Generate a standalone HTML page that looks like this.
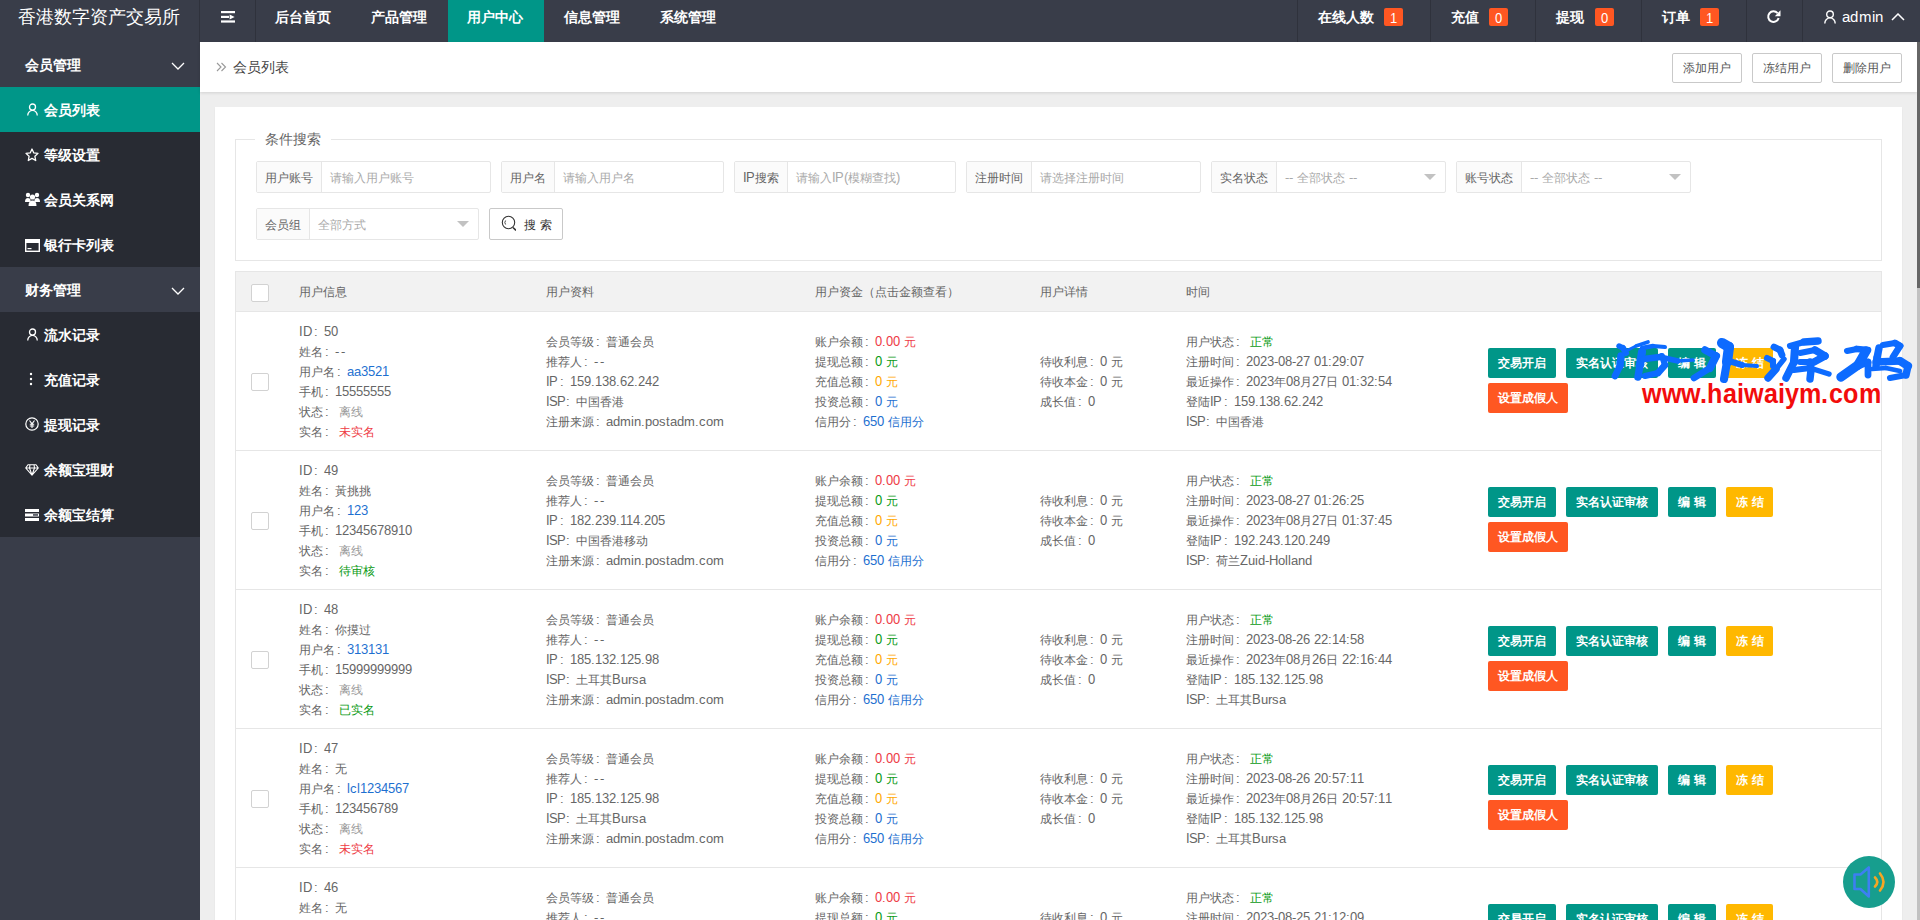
<!DOCTYPE html>
<html><head><meta charset="utf-8">
<style>
@font-face{font-family:"Liberation Sans";src:local("Liberation Sans"),local("LiberationSans");font-weight:normal;size-adjust:106%;}
@font-face{font-family:"Liberation Sans";src:local("Liberation Sans Bold"),local("LiberationSans-Bold");font-weight:bold;size-adjust:106%;}
*{box-sizing:border-box;margin:0;padding:0}
html,body{width:1920px;height:920px;overflow:hidden;background:#eeeeee}
body{font-family:"Liberation Sans",sans-serif;color:#666;font-size:12px;position:relative}
.abs{position:absolute}
#top{left:0;top:0;width:1920px;height:42px;background:#393D49;color:#fff}
#logo{left:0;top:0;width:200px;height:42px;font-size:18px;line-height:33px;padding-left:18px;color:#fff;border-right:1px solid #2f323c}
.nv{top:0;height:42px;line-height:34px;font-size:14px;color:#fff;font-weight:bold}
.dv{top:0;width:1px;height:42px;background:#2f323c}
.badge{display:inline-block;background:#FF5722;color:#fff;font-size:12px;font-weight:normal;height:18px;line-height:22px;width:19px;text-align:center;border-radius:2px;vertical-align:middle;margin-top:-3px}
#side{left:0;top:42px;width:200px;height:878px;background:#393D49;color:#fff;font-size:14px;font-weight:bold}
.grp{height:45px;line-height:46px;padding-left:25px;position:relative;background:#393D49}
.sub{background:#282B33}
.it{height:45px;line-height:47px;padding-left:44px;position:relative;color:#fff}
.it.on{background:#009688}
.it svg{position:absolute;left:25px;top:15px}
#crumb{left:200px;top:42px;width:1717px;height:50px;background:#fff;box-shadow:0 1px 3px rgba(0,0,0,.12)}
.hbtn{top:11px;width:70px;height:30px;border:1px solid #C9C9C9;border-radius:2px;background:#fff;color:#555;font-size:12px;line-height:28px;text-align:center}
#card{left:215px;top:107px;width:1687px;height:900px;background:#fff;box-shadow:0 1px 2px rgba(0,0,0,.05)}
#sb{left:1917px;top:42px;width:3px;height:878px;background:#c1c1c1}
#sbt{left:1917px;top:42px;width:3px;height:246px;background:#666}
.ig{position:absolute;height:32px;border:1px solid #e6e6e6;border-radius:2px;background:#fff;display:flex}
.ig .lb{background:#FBFBFB;border-right:1px solid #e6e6e6;padding:0 8px 0 8px;line-height:31px;color:#666;white-space:nowrap}
.ig .ph{padding-left:8px;line-height:31px;color:#aaa;white-space:nowrap;flex:1;position:relative}
.ig .ar{position:absolute;right:9px;top:12px;width:0;height:0;border-left:6px solid transparent;border-right:6px solid transparent;border-top:6px solid #c2c2c2}
/*TBLCSS*/#tbl{left:20px;top:164px;width:1647px;height:800px;border-left:1px solid #e6e6e6;border-right:1px solid #e6e6e6;border-top:1px solid #e6e6e6}
.th{left:0;top:0;width:1645px;height:40px;background:#f2f2f2;border-bottom:1px solid #e6e6e6;line-height:39px;color:#666}
.tr{left:0;width:1645px;height:139px;border-bottom:1px solid #e6e6e6}
.cb{display:block;width:18px;height:18px;border:1px solid #d2d2d2;border-radius:2px;background:#fff}
.dd{font-weight:normal;letter-spacing:1.5px}.n3{font-weight:normal;letter-spacing:-1.2px}.n2{font-weight:normal;letter-spacing:-0.6px}
.k{display:inline-block;width:12px;padding-left:2px;font-style:normal}
.c p{height:20px;line-height:20px;white-space:nowrap;color:#666}
.bt{display:inline-block;font-weight:bold;height:30px;line-height:30px;background:#009688;color:#fff;text-align:center;border-radius:2px;margin-right:10px;vertical-align:top;white-space:nowrap}
.bt.yl{background:#FFB800}.bt.og{background:#FF5722}
/*END*/</style></head><body>

<div id="top" class="abs">
  <div id="logo" class="abs">香港数字资产交易所</div>
  <svg class="abs" style="left:221px;top:11px" width="14" height="12" viewBox="0 0 14 12"><rect x="0" y="0" width="14" height="2.2" fill="#fff"/><rect x="0" y="4.8" width="8" height="2.2" fill="#fff"/><path d="M8.6 3.4 L13.6 5.9 L8.6 8.4Z" fill="#fff"/><rect x="0" y="9.4" width="14" height="2.2" fill="#fff"/></svg>
  <div class="dv abs" style="left:255px"></div>
  <div class="nv abs" style="left:275px">后台首页</div>
  <div class="nv abs" style="left:371px">产品管理</div>
  <div class="abs" style="left:448px;top:0;width:96px;height:42px;background:#009688"></div>
  <div class="nv abs" style="left:467px">用户中心</div>
  <div class="nv abs" style="left:564px">信息管理</div>
  <div class="nv abs" style="left:660px">系统管理</div>
  <div class="dv abs" style="left:1297px"></div>
  <div class="nv abs" style="left:1318px">在线人数 <span class="badge abs" style="left:66px;top:8px;margin:0">1</span></div>
  <div class="dv abs" style="left:1430px"></div>
  <div class="nv abs" style="left:1451px">充值<span class="badge abs" style="left:38px;top:8px;margin:0">0</span></div>
  <div class="dv abs" style="left:1535px"></div>
  <div class="nv abs" style="left:1556px">提现<span class="badge abs" style="left:39px;top:8px;margin:0">0</span></div>
  <div class="dv abs" style="left:1641px"></div>
  <div class="nv abs" style="left:1662px">订单<span class="badge abs" style="left:38px;top:8px;margin:0">1</span></div>
  <div class="dv abs" style="left:1746px"></div>
  <svg class="abs" style="left:1766px;top:10px" width="15" height="14" viewBox="0 0 15 14"><path d="M11.56 3.19 A5.3 5.3 0 1 0 12.62 7.97" fill="none" stroke="#fff" stroke-width="2"/><path d="M8.8 6.2 L14.5 6.2 L14.5 0.2 Z" fill="#fff"/></svg>
  <div class="dv abs" style="left:1802px"></div>
  <svg class="abs" style="left:1824px;top:10px" width="12" height="14" viewBox="0 0 12 14"><circle cx="6" cy="4.3" r="3.3" fill="none" stroke="#fff" stroke-width="1.4"/><path d="M0.8 13.5 A5.2 5.6 0 0 1 11.2 13.5" fill="none" stroke="#fff" stroke-width="1.4"/></svg>
  <div class="nv abs" style="left:1842px;font-size:14px;line-height:34px;font-weight:normal;letter-spacing:0.3px">admin</div>
  <svg class="abs" style="left:1891px;top:13px" width="14" height="8" viewBox="0 0 14 8"><path d="M1 7 L7 1 L13 7" fill="none" stroke="#fff" stroke-width="1.5"/></svg>
</div>

<div id="side" class="abs">
  <div class="grp">会员管理<svg class="abs" style="left:171px;top:20px" width="14" height="8" viewBox="0 0 14 8"><path d="M1 1 L7 7 L13 1" fill="none" stroke="#fff" stroke-width="1.3"/></svg></div>
  <div class="sub">
    <div class="it on"><svg width="11" height="13" viewBox="0 0 12 14" style="left:27px;top:16px"><circle cx="6" cy="4.3" r="3.3" fill="none" stroke="#fff" stroke-width="1.4"/><path d="M0.8 13.5 A5.2 5.6 0 0 1 11.2 13.5" fill="none" stroke="#fff" stroke-width="1.4"/></svg>会员列表</div>
    <div class="it"><svg width="14" height="14" viewBox="0 0 14 14" style="top:16px"><path d="M7 1 L8.8 4.9 L13 5.4 L9.9 8.3 L10.7 12.5 L7 10.4 L3.3 12.5 L4.1 8.3 L1 5.4 L5.2 4.9Z" fill="none" stroke="#fff" stroke-width="1.3" stroke-linejoin="round"/></svg>等级设置</div>
    <div class="it"><svg width="15" height="14" viewBox="0 0 15 14"><circle cx="3" cy="3" r="2.2" fill="#fff"/><circle cx="12" cy="3" r="2.2" fill="#fff"/><circle cx="7.5" cy="5" r="2.6" fill="#fff"/><path d="M0 10 Q0 6 3 6 Q5 6 5.5 7.5 L5.5 10Z M15 10 Q15 6 12 6 Q10 6 9.5 7.5 L9.5 10Z" fill="#fff"/><path d="M3.5 14 Q3.5 8.5 7.5 8.5 Q11.5 8.5 11.5 14Z" fill="#fff"/></svg>会员关系网</div>
    <div class="it"><svg width="15" height="13" viewBox="0 0 15 13" style="top:17px"><rect x="0.7" y="0.7" width="13.6" height="11.6" fill="none" stroke="#fff" stroke-width="1.4"/><rect x="0.7" y="0.7" width="13.6" height="3.3" fill="#fff"/><rect x="2.5" y="9" width="4" height="1.2" fill="#fff"/></svg>银行卡列表</div>
  </div>
  <div class="grp">财务管理<svg class="abs" style="left:171px;top:20px" width="14" height="8" viewBox="0 0 14 8"><path d="M1 1 L7 7 L13 1" fill="none" stroke="#fff" stroke-width="1.3"/></svg></div>
  <div class="sub">
    <div class="it"><svg width="11" height="13" viewBox="0 0 12 14" style="left:27px;top:16px"><circle cx="6" cy="4.3" r="3.3" fill="none" stroke="#fff" stroke-width="1.4"/><path d="M0.8 13.5 A5.2 5.6 0 0 1 11.2 13.5" fill="none" stroke="#fff" stroke-width="1.4"/></svg>流水记录</div>
    <div class="it"><svg width="12" height="14" viewBox="0 0 12 14"><circle cx="6" cy="2" r="1.2" fill="#fff"/><circle cx="6" cy="7" r="1.2" fill="#fff"/><circle cx="6" cy="12" r="1.2" fill="#fff"/></svg>充值记录</div>
    <div class="it"><svg width="14" height="14" viewBox="0 0 14 14"><circle cx="7" cy="7" r="6.2" fill="none" stroke="#fff" stroke-width="1.2"/><path d="M4.5 3.5 L7 6.8 L9.5 3.5 M7 6.8 V11 M4.8 7.2 H9.2 M4.8 9 H9.2" fill="none" stroke="#fff" stroke-width="1.1"/></svg>提现记录</div>
    <div class="it"><svg width="14" height="12" viewBox="0 0 14 12" style="top:17px"><path d="M3 0.7 H11 L13.3 4 L7 11.2 L0.7 4Z M0.7 4 H13.3 M5 0.7 L4.5 4 L7 11 L9.5 4 L9 0.7" fill="none" stroke="#fff" stroke-width="1.1" stroke-linejoin="round"/></svg>余额宝理财</div>
    <div class="it"><svg width="14" height="12" viewBox="0 0 14 12" style="top:17px"><rect x="0" y="0" width="14" height="3" fill="#fff"/><rect x="0" y="4.5" width="14" height="3" fill="#fff"/><rect x="0" y="9" width="14" height="3" fill="#fff"/><rect x="8" y="5.2" width="5" height="1.5" fill="#393D49"/></svg>余额宝结算</div>
  </div>
</div>
<div id="crumb" class="abs">
  <svg class="abs" style="left:16px;top:20px" width="11" height="10" viewBox="0 0 11 10"><path d="M1 1 L5 5 L1 9 M5.5 1 L9.5 5 L5.5 9" fill="none" stroke="#999" stroke-width="1.1"/></svg>
  <div class="abs" style="left:33px;top:0;line-height:50px;font-size:14px;color:#444">会员列表</div>
  <div class="hbtn abs" style="left:1472px">添加用户</div>
  <div class="hbtn abs" style="left:1552px">冻结用户</div>
  <div class="hbtn abs" style="left:1632px">删除用户</div>
</div>
<div id="card" class="abs">
  <div class="abs" style="left:20px;top:32px;width:1647px;height:122px;border:1px solid #e6e6e6"></div>
  <div class="abs" style="left:40px;top:22px;width:76px;height:20px;background:#fff;text-align:center;line-height:20px;font-size:14px;color:#666">条件搜索</div>
  <div class="ig" style="left:41px;top:54px;width:235px"><div class="lb">用户账号</div><div class="ph">请输入用户账号</div></div>
  <div class="ig" style="left:286px;top:54px;width:223px"><div class="lb">用户名</div><div class="ph">请输入用户名</div></div>
  <div class="ig" style="left:519px;top:54px;width:222px"><div class="lb"><b class="n2">IP</b>搜索</div><div class="ph">请输入<b class="n2">IP</b>(模糊查找)</div></div>
  <div class="ig" style="left:751px;top:54px;width:235px"><div class="lb">注册时间</div><div class="ph">请选择注册时间</div></div>
  <div class="ig" style="left:996px;top:54px;width:235px"><div class="lb">实名状态</div><div class="ph">-- 全部状态 --<i class="ar"></i></div></div>
  <div class="ig" style="left:1241px;top:54px;width:235px"><div class="lb">账号状态</div><div class="ph">-- 全部状态 --<i class="ar"></i></div></div>
  <div class="ig" style="left:41px;top:101px;width:223px"><div class="lb">会员组</div><div class="ph">全部方式<i class="ar"></i></div></div>
  <div class="abs" style="left:274px;top:101px;width:74px;height:32px;border:1px solid #c9c9c9;border-radius:2px;background:#fff">
    <svg class="abs" style="left:10px;top:6px" width="16" height="17" viewBox="0 0 16 17"><circle cx="8.5" cy="7.5" r="6.2" fill="none" stroke="#333" stroke-width="1.1"/><path d="M13 12.5 L16 15.5" stroke="#333" stroke-width="1.6"/><path d="M5.6 5.5 A3.2 3.2 0 0 0 5.6 9.5" fill="none" stroke="#333" stroke-width="0.9"/></svg>
    <div class="abs" style="left:34px;top:1px;line-height:30px;color:#333;font-size:12px">搜 索</div>
  </div>
<!--TBL--><div id="tbl" class="abs">
<div class="th abs"><i class="cb abs" style="left:15px;top:12px"></i><span class="abs" style="left:63px">用户信息</span><span class="abs" style="left:310px">用户资料</span><span class="abs" style="left:579px">用户资金（点击金额查看）</span><span class="abs" style="left:804px">用户详情</span><span class="abs" style="left:950px">时间</span></div>
<div class="tr abs" style="top:40px"><i class="cb abs" style="left:15px;top:61px"></i><div class="c abs" style="left:63px;top:10px"><p>ID<i class="k">:</i>50</p><p>姓名<i class="k">:</i><b class="dd">--</b></p><p>用户名<i class="k">:</i><span style="color:#1d6fd0">aa3521</span></p><p>手机<i class="k">:</i>15555555</p><p>状态<i class="k">:</i> <span style="color:#999">离线</span></p><p>实名<i class="k">:</i> <span style="color:#ee3b45">未实名</span></p></div><div class="c abs" style="left:310px;top:20px"><p>会员等级<i class="k">:</i>普通会员</p><p>推荐人<i class="k">:</i><b class="dd">--</b></p><p><b class="n2">IP</b><i class="k">:</i>159.138.62.242</p><p><b class="n3">ISP</b><i class="k">:</i>中国香港</p><p>注册来源<i class="k">:</i>admin.postadm.com</p></div><div class="c abs" style="left:579px;top:20px"><p>账户余额<i class="k">:</i><span style="color:#ee3b45">0.00 元</span></p><p>提现总额<i class="k">:</i><span style="color:#0a9a14">0 元</span></p><p>充值总额<i class="k">:</i><span style="color:#FFA800">0 元</span></p><p>投资总额<i class="k">:</i><span style="color:#1d6fd0">0 元</span></p><p>信用分<i class="k">:</i><span style="color:#1d6fd0">650 信用分</span></p></div><div class="c abs" style="left:804px;top:40px"><p>待收利息<i class="k">:</i>0 元</p><p>待收本金<i class="k">:</i>0 元</p><p>成长值<i class="k">:</i>0</p></div><div class="c abs" style="left:950px;top:20px"><p>用户状态<i class="k">:</i> <span style="color:#0a9a14">正常</span></p><p>注册时间<i class="k">:</i>2023-08-27 01:29:07</p><p>最近操作<i class="k">:</i>2023年08月27日 01:32:54</p><p>登陆<b class="n2">IP</b><i class="k">:</i>159.138.62.242</p><p><b class="n3">ISP</b><i class="k">:</i>中国香港</p></div><div class="abs" style="left:1252px;top:36px;width:300px"><span class="bt" style="width:68px">交易开启</span><span class="bt" style="width:92px">实名认证审核</span><span class="bt" style="width:48px">编 辑</span><span class="bt yl" style="width:47px">冻 结</span><br><span class="bt og" style="width:80px;margin-top:5px">设置成假人</span></div></div>
<div class="tr abs" style="top:179px"><i class="cb abs" style="left:15px;top:61px"></i><div class="c abs" style="left:63px;top:10px"><p>ID<i class="k">:</i>49</p><p>姓名<i class="k">:</i>黃挑挑</p><p>用户名<i class="k">:</i><span style="color:#1d6fd0">123</span></p><p>手机<i class="k">:</i>12345678910</p><p>状态<i class="k">:</i> <span style="color:#999">离线</span></p><p>实名<i class="k">:</i> <span style="color:#0a9a14">待审核</span></p></div><div class="c abs" style="left:310px;top:20px"><p>会员等级<i class="k">:</i>普通会员</p><p>推荐人<i class="k">:</i><b class="dd">--</b></p><p><b class="n2">IP</b><i class="k">:</i>182.239.114.205</p><p><b class="n3">ISP</b><i class="k">:</i>中国香港移动</p><p>注册来源<i class="k">:</i>admin.postadm.com</p></div><div class="c abs" style="left:579px;top:20px"><p>账户余额<i class="k">:</i><span style="color:#ee3b45">0.00 元</span></p><p>提现总额<i class="k">:</i><span style="color:#0a9a14">0 元</span></p><p>充值总额<i class="k">:</i><span style="color:#FFA800">0 元</span></p><p>投资总额<i class="k">:</i><span style="color:#1d6fd0">0 元</span></p><p>信用分<i class="k">:</i><span style="color:#1d6fd0">650 信用分</span></p></div><div class="c abs" style="left:804px;top:40px"><p>待收利息<i class="k">:</i>0 元</p><p>待收本金<i class="k">:</i>0 元</p><p>成长值<i class="k">:</i>0</p></div><div class="c abs" style="left:950px;top:20px"><p>用户状态<i class="k">:</i> <span style="color:#0a9a14">正常</span></p><p>注册时间<i class="k">:</i>2023-08-27 01:26:25</p><p>最近操作<i class="k">:</i>2023年08月27日 01:37:45</p><p>登陆<b class="n2">IP</b><i class="k">:</i>192.243.120.249</p><p><b class="n3">ISP</b><i class="k">:</i>荷兰Zuid-Holland</p></div><div class="abs" style="left:1252px;top:36px;width:300px"><span class="bt" style="width:68px">交易开启</span><span class="bt" style="width:92px">实名认证审核</span><span class="bt" style="width:48px">编 辑</span><span class="bt yl" style="width:47px">冻 结</span><br><span class="bt og" style="width:80px;margin-top:5px">设置成假人</span></div></div>
<div class="tr abs" style="top:318px"><i class="cb abs" style="left:15px;top:61px"></i><div class="c abs" style="left:63px;top:10px"><p>ID<i class="k">:</i>48</p><p>姓名<i class="k">:</i>你摸过</p><p>用户名<i class="k">:</i><span style="color:#1d6fd0">313131</span></p><p>手机<i class="k">:</i>15999999999</p><p>状态<i class="k">:</i> <span style="color:#999">离线</span></p><p>实名<i class="k">:</i> <span style="color:#0a9a14">已实名</span></p></div><div class="c abs" style="left:310px;top:20px"><p>会员等级<i class="k">:</i>普通会员</p><p>推荐人<i class="k">:</i><b class="dd">--</b></p><p><b class="n2">IP</b><i class="k">:</i>185.132.125.98</p><p><b class="n3">ISP</b><i class="k">:</i>土耳其Bursa</p><p>注册来源<i class="k">:</i>admin.postadm.com</p></div><div class="c abs" style="left:579px;top:20px"><p>账户余额<i class="k">:</i><span style="color:#ee3b45">0.00 元</span></p><p>提现总额<i class="k">:</i><span style="color:#0a9a14">0 元</span></p><p>充值总额<i class="k">:</i><span style="color:#FFA800">0 元</span></p><p>投资总额<i class="k">:</i><span style="color:#1d6fd0">0 元</span></p><p>信用分<i class="k">:</i><span style="color:#1d6fd0">650 信用分</span></p></div><div class="c abs" style="left:804px;top:40px"><p>待收利息<i class="k">:</i>0 元</p><p>待收本金<i class="k">:</i>0 元</p><p>成长值<i class="k">:</i>0</p></div><div class="c abs" style="left:950px;top:20px"><p>用户状态<i class="k">:</i> <span style="color:#0a9a14">正常</span></p><p>注册时间<i class="k">:</i>2023-08-26 22:14:58</p><p>最近操作<i class="k">:</i>2023年08月26日 22:16:44</p><p>登陆<b class="n2">IP</b><i class="k">:</i>185.132.125.98</p><p><b class="n3">ISP</b><i class="k">:</i>土耳其Bursa</p></div><div class="abs" style="left:1252px;top:36px;width:300px"><span class="bt" style="width:68px">交易开启</span><span class="bt" style="width:92px">实名认证审核</span><span class="bt" style="width:48px">编 辑</span><span class="bt yl" style="width:47px">冻 结</span><br><span class="bt og" style="width:80px;margin-top:5px">设置成假人</span></div></div>
<div class="tr abs" style="top:457px"><i class="cb abs" style="left:15px;top:61px"></i><div class="c abs" style="left:63px;top:10px"><p>ID<i class="k">:</i>47</p><p>姓名<i class="k">:</i>无</p><p>用户名<i class="k">:</i><span style="color:#1d6fd0">lcl1234567</span></p><p>手机<i class="k">:</i>123456789</p><p>状态<i class="k">:</i> <span style="color:#999">离线</span></p><p>实名<i class="k">:</i> <span style="color:#ee3b45">未实名</span></p></div><div class="c abs" style="left:310px;top:20px"><p>会员等级<i class="k">:</i>普通会员</p><p>推荐人<i class="k">:</i><b class="dd">--</b></p><p><b class="n2">IP</b><i class="k">:</i>185.132.125.98</p><p><b class="n3">ISP</b><i class="k">:</i>土耳其Bursa</p><p>注册来源<i class="k">:</i>admin.postadm.com</p></div><div class="c abs" style="left:579px;top:20px"><p>账户余额<i class="k">:</i><span style="color:#ee3b45">0.00 元</span></p><p>提现总额<i class="k">:</i><span style="color:#0a9a14">0 元</span></p><p>充值总额<i class="k">:</i><span style="color:#FFA800">0 元</span></p><p>投资总额<i class="k">:</i><span style="color:#1d6fd0">0 元</span></p><p>信用分<i class="k">:</i><span style="color:#1d6fd0">650 信用分</span></p></div><div class="c abs" style="left:804px;top:40px"><p>待收利息<i class="k">:</i>0 元</p><p>待收本金<i class="k">:</i>0 元</p><p>成长值<i class="k">:</i>0</p></div><div class="c abs" style="left:950px;top:20px"><p>用户状态<i class="k">:</i> <span style="color:#0a9a14">正常</span></p><p>注册时间<i class="k">:</i>2023-08-26 20:57:11</p><p>最近操作<i class="k">:</i>2023年08月26日 20:57:11</p><p>登陆<b class="n2">IP</b><i class="k">:</i>185.132.125.98</p><p><b class="n3">ISP</b><i class="k">:</i>土耳其Bursa</p></div><div class="abs" style="left:1252px;top:36px;width:300px"><span class="bt" style="width:68px">交易开启</span><span class="bt" style="width:92px">实名认证审核</span><span class="bt" style="width:48px">编 辑</span><span class="bt yl" style="width:47px">冻 结</span><br><span class="bt og" style="width:80px;margin-top:5px">设置成假人</span></div></div>
<div class="tr abs" style="top:596px"><i class="cb abs" style="left:15px;top:61px"></i><div class="c abs" style="left:63px;top:10px"><p>ID<i class="k">:</i>46</p><p>姓名<i class="k">:</i>无</p><p>用户名<i class="k">:</i><span style="color:#1d6fd0">lcl123</span></p><p>手机<i class="k">:</i>123456789</p><p>状态<i class="k">:</i> <span style="color:#999">离线</span></p><p>实名<i class="k">:</i> <span style="color:#ee3b45">未实名</span></p></div><div class="c abs" style="left:310px;top:20px"><p>会员等级<i class="k">:</i>普通会员</p><p>推荐人<i class="k">:</i><b class="dd">--</b></p><p><b class="n2">IP</b><i class="k">:</i>185.132.125.98</p><p><b class="n3">ISP</b><i class="k">:</i>土耳其Bursa</p><p>注册来源<i class="k">:</i>admin.postadm.com</p></div><div class="c abs" style="left:579px;top:20px"><p>账户余额<i class="k">:</i><span style="color:#ee3b45">0.00 元</span></p><p>提现总额<i class="k">:</i><span style="color:#0a9a14">0 元</span></p><p>充值总额<i class="k">:</i><span style="color:#FFA800">0 元</span></p><p>投资总额<i class="k">:</i><span style="color:#1d6fd0">0 元</span></p><p>信用分<i class="k">:</i><span style="color:#1d6fd0">650 信用分</span></p></div><div class="c abs" style="left:804px;top:40px"><p>待收利息<i class="k">:</i>0 元</p><p>待收本金<i class="k">:</i>0 元</p><p>成长值<i class="k">:</i>0</p></div><div class="c abs" style="left:950px;top:20px"><p>用户状态<i class="k">:</i> <span style="color:#0a9a14">正常</span></p><p>注册时间<i class="k">:</i>2023-08-25 21:12:09</p><p>最近操作<i class="k">:</i>2023年08月25日 21:12:09</p><p>登陆<b class="n2">IP</b><i class="k">:</i>185.132.125.98</p><p><b class="n3">ISP</b><i class="k">:</i>土耳其Bursa</p></div><div class="abs" style="left:1252px;top:36px;width:300px"><span class="bt" style="width:68px">交易开启</span><span class="bt" style="width:92px">实名认证审核</span><span class="bt" style="width:48px">编 辑</span><span class="bt yl" style="width:47px">冻 结</span><br><span class="bt og" style="width:80px;margin-top:5px">设置成假人</span></div></div>
</div><!--/TBL-->
</div>
<!--WM--><svg class="abs" style="left:0;top:0" width="1920" height="920" viewBox="0 0 1920 920">
<g stroke="#0d6bff" stroke-linecap="round" fill="none">
<path d="M1619,346 L1623,348" stroke-width="5.4"/>
<path d="M1623,348 L1626,353" stroke-width="6.08"/>
<path d="M1621,356 L1620,366" stroke-width="7.43"/>
<path d="M1620,366 L1615,376" stroke-width="6.75"/>
<path d="M1624,352 L1636,346" stroke-width="3.04"/>
<path d="M1636,346 L1648,342" stroke-width="3.71"/>
<path d="M1642,348 L1653,346" stroke-width="4.39"/>
<path d="M1653,346 L1665,347" stroke-width="4.05"/>
<path d="M1642,352 L1640,365" stroke-width="8.1"/>
<path d="M1640,365 L1638,377" stroke-width="7.43"/>
<path d="M1644,359 L1660,357" stroke-width="6.75"/>
<path d="M1660,357 L1678,361" stroke-width="5.4"/>
<path d="M1662,356 L1665,365" stroke-width="6.08"/>
<path d="M1665,365 L1658,373" stroke-width="6.75"/>
<path d="M1658,373 L1645,376" stroke-width="6.08"/>
<path d="M1678,361 L1693,360" stroke-width="3.71"/>
<path d="M1705,350 L1716,356" stroke-width="7.43"/>
<path d="M1716,356 L1710,368" stroke-width="8.1"/>
<path d="M1710,368 L1694,378" stroke-width="6.75"/>
<path d="M1722,343 L1729,347" stroke-width="10.12"/>
<path d="M1729,347 L1727,362" stroke-width="10.12"/>
<path d="M1727,362 L1724,379" stroke-width="8.1"/>
<path d="M1729,361 L1742,365" stroke-width="6.08"/>
<path d="M1742,365 L1757,366" stroke-width="4.05"/>
<path d="M1774,347 L1780,350" stroke-width="6.75"/>
<path d="M1780,350 L1782,355" stroke-width="6.75"/>
<path d="M1767,358 L1773,361" stroke-width="6.08"/>
<path d="M1773,361 L1773,366" stroke-width="6.08"/>
<path d="M1768,378 L1776,369" stroke-width="7.43"/>
<path d="M1776,369 L1784,359" stroke-width="5.4"/>
<path d="M1790,346 L1804,342" stroke-width="6.08"/>
<path d="M1804,342 L1818,341" stroke-width="7.43"/>
<path d="M1795,347 L1794,362" stroke-width="8.1"/>
<path d="M1794,362 L1786,378" stroke-width="7.43"/>
<path d="M1800,353 L1815,350" stroke-width="6.08"/>
<path d="M1815,350 L1825,356" stroke-width="7.43"/>
<path d="M1825,356 L1814,362" stroke-width="7.43"/>
<path d="M1814,362 L1800,362" stroke-width="6.08"/>
<path d="M1810,362 L1811,370" stroke-width="7.43"/>
<path d="M1811,370 L1810,379" stroke-width="7.43"/>
<path d="M1794,370 L1810,368" stroke-width="6.08"/>
<path d="M1810,368 L1829,374" stroke-width="5.4"/>
<path d="M1847,351 L1857,349" stroke-width="6.08"/>
<path d="M1857,349 L1868,350" stroke-width="6.75"/>
<path d="M1866,351 L1858,365" stroke-width="9.45"/>
<path d="M1858,365 L1841,377" stroke-width="9.45"/>
<path d="M1858,366 L1868,362" stroke-width="6.75"/>
<path d="M1868,362 L1868,375" stroke-width="6.75"/>
<path d="M1883,345 L1895,343" stroke-width="6.08"/>
<path d="M1895,343 L1900,346" stroke-width="6.75"/>
<path d="M1900,346 L1893,357" stroke-width="6.75"/>
<path d="M1879,348 L1877,358" stroke-width="7.43"/>
<path d="M1877,358 L1876,366" stroke-width="7.43"/>
<path d="M1876,362 L1900,361" stroke-width="7.43"/>
<path d="M1900,361 L1908,366" stroke-width="8.1"/>
<path d="M1908,366 L1906,375" stroke-width="7.43"/>
<path d="M1906,375 L1890,378" stroke-width="6.08"/>
<path d="M1872,369 L1886,368" stroke-width="4.73"/>
<path d="M1886,368 L1900,371" stroke-width="4.73"/>
</g>
<text x="1642" y="403" font-family="Liberation Sans" font-weight="bold" font-size="25.5" fill="#f20c0c" textLength="239" lengthAdjust="spacingAndGlyphs">www.haiwaiym.com</text>
<circle cx="1869" cy="882" r="26" fill="#179e8e"/>
<path d="M1854.5,874.5 H1860.5 L1868.8,867.5 V896.5 L1860.5,889 H1854.5 Z" fill="none" stroke="#3d7ff2" stroke-width="2.6" stroke-linejoin="round"/>
<path d="M1875,877.5 Q1879.5,882 1875,886.5" fill="none" stroke="#f5a623" stroke-width="2.6" stroke-linecap="round"/>
<path d="M1880,873.5 Q1887,882 1880,890.5" fill="none" stroke="#f5a623" stroke-width="2.6" stroke-linecap="round"/>
</svg><!--/WM-->
<div id="sb" class="abs"></div>
<div id="sbt" class="abs"></div>
</body></html>
